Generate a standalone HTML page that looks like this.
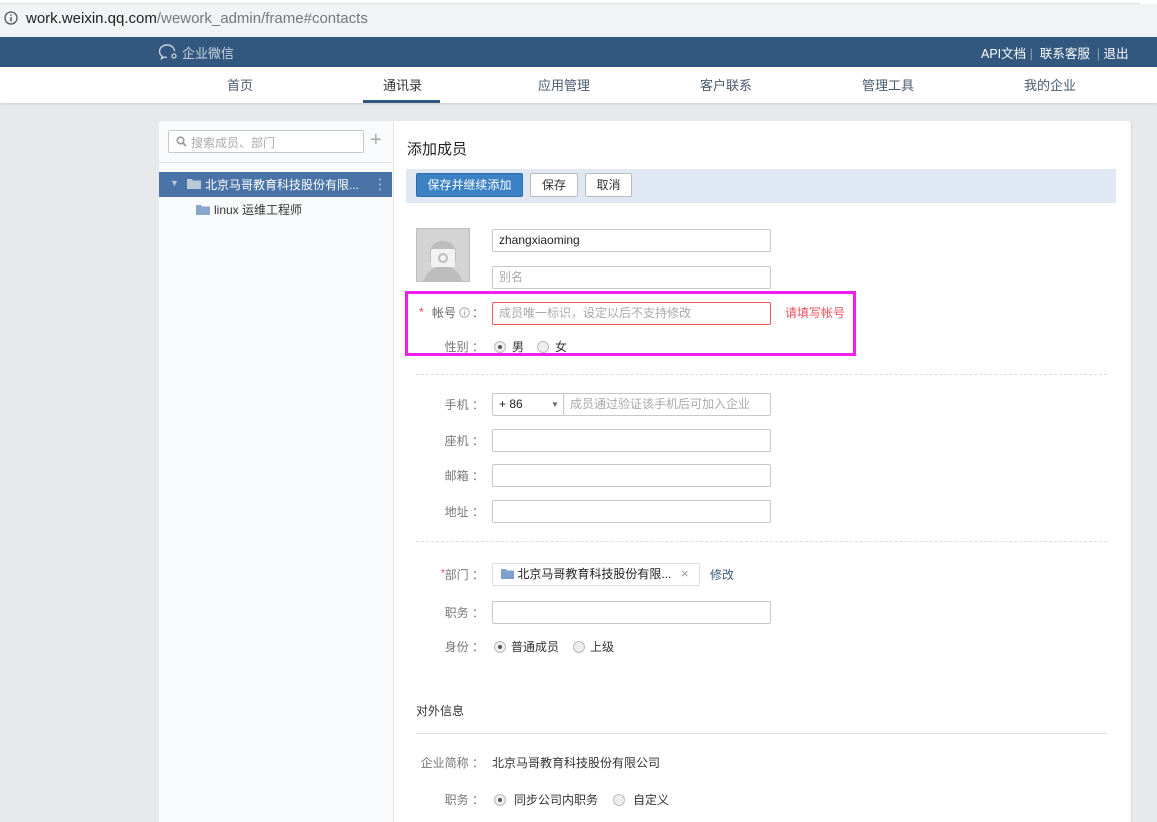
<!DOCTYPE html>
<html><head><meta charset="utf-8"><style>
*{margin:0;padding:0;box-sizing:border-box}
body{width:1157px;height:822px;overflow:hidden;background:#e8e9ec;font-family:"Liberation Sans","Noto Sans CJK SC",sans-serif;font-size:12px;color:#333;position:relative}
.a{position:absolute}
.inp{position:absolute;border:1px solid #c8c8c8;border-radius:2px;background:#fff;height:23px;padding-left:6px;line-height:21px;font-size:12px}
.lbl{position:absolute;left:394px !important;width:90px;text-align:right;color:#777;font-size:12px}
.rad{position:absolute;width:12px;height:12px;border-radius:50%;border:1px solid #bbb;background:#eee}
.rad.on::after{content:"";position:absolute;left:3px;top:3px;width:4px;height:4px;border-radius:50%;background:#555}
.dash{position:absolute;left:416px;width:691px;border-top:1px dashed #ddd}
</style></head><body>
<div class="a" style="left:0;top:0;width:1157px;height:37px;background:#f1f3f4;border-top:4px solid #fff"></div>
<div class="a" style="left:0;top:3px;width:1140px;height:1px;background:#ddd"></div>
<svg class="a" style="left:4px;top:11px" width="14" height="14"><circle cx="7" cy="7" r="6" fill="none" stroke="#555" stroke-width="1.3"/><rect x="6.3" y="6" width="1.4" height="4.5" fill="#555"/><rect x="6.3" y="3.4" width="1.4" height="1.4" fill="#555"/></svg>
<div class="a" style="left:26px;top:10px;font-size:15px;color:#202124">work.weixin.qq.com<span style="color:#777">/wework_admin/frame#contacts</span></div>
<div class="a" style="left:0;top:37px;width:1157px;height:30px;background:#33587f"></div>
<svg class="a" style="left:158px;top:43px" width="22" height="18"><path d="M9 2C4.5 2 1.5 5 1.5 8.5c0 2 1 3.6 2.6 4.7L3.5 15.5 6.3 14c.9.3 1.8.4 2.7.4" fill="none" stroke="#c8d3df" stroke-width="1.4"/><path d="M9 2c4.5 0 7.5 3 7.5 6.3" fill="none" stroke="#c8d3df" stroke-width="1.4"/><circle cx="16" cy="13" r="2" fill="none" stroke="#c8d3df" stroke-width="1.3"/></svg>
<div class="a" style="left:182px;top:43px;font-size:13px;color:#c8d3df">企业微信</div>
<div class="a" style="left:981px;top:43px;font-size:12.5px;color:#fff;white-space:nowrap">API文档 <span style="color:#8aa">|</span>&nbsp; 联系客服 &nbsp;<span style="color:#8aa">|</span> 退出</div>
<div class="a" style="left:0;top:67px;width:1157px;height:36px;background:#fff;box-shadow:0 1px 3px rgba(0,0,0,.12)"></div>
<div class="a" style="top:75px;left:0;width:1157px;font-size:13px;color:#4a5a6e">
<span class="a" style="left:227px">首页</span><span class="a" style="left:383px;color:#333">通讯录</span><span class="a" style="left:538px">应用管理</span><span class="a" style="left:700px">客户联系</span><span class="a" style="left:862px">管理工具</span><span class="a" style="left:1024px">我的企业</span></div>
<div class="a" style="left:363px;top:100px;width:77px;height:3px;background:#33587f"></div>
<div class="a" style="left:159px;top:121px;width:234px;height:701px;background:#f9fafb;border-radius:3px 0 0 0"></div>
<div class="a" style="left:168px;top:130px;width:196px;height:23px;border:1px solid #c5cad1;border-radius:2px;background:#fff"></div>
<svg class="a" style="left:176px;top:136px" width="11" height="11"><circle cx="4.5" cy="4.5" r="3.3" fill="none" stroke="#999" stroke-width="1.6"/><path d="M7 7l3 3" stroke="#999" stroke-width="1.8"/></svg>
<div class="a" style="left:191px;top:134px;color:#aaa">搜索成员、部门</div>
<div class="a" style="left:370px;top:129px;font-size:20px;color:#aaa;font-weight:300">+</div>
<div class="a" style="left:159px;top:162px;width:233px;height:1px;background:#e4e6e9"></div>
<div class="a" style="left:159px;top:172px;width:233px;height:25px;background:#4a74a8"></div>
<div class="a" style="left:170px;top:178px;color:#b7c6d8;font-size:9px">▼</div>
<svg class="a" style="left:187px;top:178px" width="14" height="11"><path d="M0 1h5l1 1.5h8V11H0z" fill="#b9c7d9"/></svg>
<div class="a" style="left:205px;top:176px;color:#fff">北京马哥教育科技股份有限...</div>
<div class="a" style="left:379px;top:177px;width:2px;height:14px;background:radial-gradient(circle,#9fb3cc 1px,transparent 1.2px) 0 0/2px 5px"></div>
<svg class="a" style="left:196px;top:204px" width="14" height="11"><path d="M0 1h5l1 1.5h8V11H0z" fill="#89a6cc"/></svg>
<div class="a" style="left:214px;top:201px;color:#333">linux 运维工程师</div>
<div class="a" style="left:393px;top:121px;width:738px;height:701px;background:#fff;border-radius:0 3px 0 0;border-left:1px solid #e4e6e9;box-shadow:1px 0 1px rgba(0,0,0,.08)"></div>
<div class="a" style="left:407px;top:138px;font-size:15px;color:#222">添加成员</div>
<div class="a" style="left:406px;top:169px;width:710px;height:34px;background:#dfe8f3"></div>
<div class="a" style="left:416px;top:173px;width:107px;height:24px;background:#3b82c4;border:1px solid #2f6fae;border-radius:2px;color:#fff;text-align:center;line-height:22px">保存并继续添加</div>
<div class="a" style="left:530px;top:173px;width:48px;height:24px;background:#fff;border:1px solid #bbb;border-radius:2px;text-align:center;line-height:22px">保存</div>
<div class="a" style="left:585px;top:173px;width:47px;height:24px;background:#fff;border:1px solid #bbb;border-radius:2px;text-align:center;line-height:22px">取消</div>
<div class="a" style="left:416px;top:228px;width:54px;height:54px;background:#d4d4d4;border:1px solid #c0c0c0;overflow:hidden">
<div class="a" style="left:13px;top:12px;width:26px;height:22px;border-radius:12px 12px 0 0;background:#bdbdbd"></div>
<div class="a" style="left:6px;top:37px;width:40px;height:20px;border-radius:20px 20px 0 0;background:#bdbdbd"></div>
<div class="a" style="left:14px;top:20px;width:24px;height:18px;background:#f2f2f2;border-radius:2px"></div>
<div class="a" style="left:21px;top:24px;width:10px;height:10px;border:2px solid #bbb;border-radius:50%"></div></div>
<div class="inp" style="left:492px;top:229px;width:279px;color:#222">zhangxiaoming</div>
<div class="inp" style="left:492px;top:266px;width:279px;color:#aaa">别名</div>
<div class="a" style="left:405px;top:291px;width:451px;height:65px;border:3px solid #f01ff0"></div>
<div class="a" style="left:419px;top:305px;color:#e0434e">*</div>
<div class="a" style="left:432px;top:304px;color:#666">帐号</div>
<svg class="a" style="left:459px;top:307px" width="11" height="11"><circle cx="5.5" cy="5.5" r="4.8" fill="none" stroke="#aaa"/><rect x="5" y="4.5" width="1" height="4" fill="#aaa"/><rect x="5" y="2.6" width="1" height="1" fill="#aaa"/></svg>
<div class="a" style="left:472px;top:304px;color:#666">：</div>
<div class="inp" style="left:492px;top:302px;width:279px;color:#aaa;border-color:#f05b5b">成员唯一标识，设定以后不支持修改</div>
<div class="a" style="left:785px;top:304px;color:#f0505c">请填写帐号</div>
<div class="lbl" style="top:338px">性别 ：</div>
<div class="rad on" style="left:494px;top:341px"></div><div class="a" style="left:512px;top:338px">男</div>
<div class="rad" style="left:537px;top:341px"></div><div class="a" style="left:555px;top:338px">女</div>
<div class="dash" style="top:374px"></div>
<div class="lbl" style="top:396px">手机 ：</div>
<div class="inp" style="left:492px;top:393px;width:72px;color:#222">+ 86<span class="a" style="left:58px;top:0;font-size:8px;color:#666">▼</span></div>
<div class="inp" style="left:563px;top:393px;width:208px;color:#aaa">成员通过验证该手机后可加入企业</div>
<div class="lbl" style="top:432px">座机 ：</div><div class="inp" style="left:492px;top:429px;width:279px"></div>
<div class="lbl" style="top:467px">邮箱 ：</div><div class="inp" style="left:492px;top:464px;width:279px"></div>
<div class="lbl" style="top:503px">地址 ：</div><div class="inp" style="left:492px;top:500px;width:279px"></div>
<div class="dash" style="top:541px"></div>
<div class="a" style="left:441px;top:568px;color:#e0434e;font-size:10px">*</div>
<div class="lbl" style="top:566px">部门 ：</div>
<div class="inp" style="left:492px;top:563px;width:208px;border-color:#ddd;color:#222;padding-left:8px"><svg width="13" height="10" style="vertical-align:-1px"><path d="M0 0h5l1 1.5h7V10H0z" fill="#7fa0cc"/></svg> 北京马哥教育科技股份有限...<span class="a" style="left:188px;color:#999;font-size:13px;top:-1px">×</span></div>
<div class="a" style="left:710px;top:566px;color:#3d5a80">修改</div>
<div class="lbl" style="top:604px">职务 ：</div><div class="inp" style="left:492px;top:601px;width:279px"></div>
<div class="lbl" style="top:638px">身份 ：</div>
<div class="rad on" style="left:494px;top:641px"></div><div class="a" style="left:511px;top:638px">普通成员</div>
<div class="rad" style="left:573px;top:641px"></div><div class="a" style="left:590px;top:638px">上级</div>
<div class="a" style="left:416px;top:702px">对外信息</div>
<div class="a" style="left:416px;top:733px;width:691px;height:1px;background:#e2e2e2"></div>
<div class="lbl" style="top:754px">企业简称 ：</div>
<div class="a" style="left:492px;top:754px">北京马哥教育科技股份有限公司</div>
<div class="lbl" style="top:791px">职务 ：</div>
<div class="rad on" style="left:494px;top:794px"></div><div class="a" style="left:514px;top:791px">同步公司内职务</div>
<div class="rad" style="left:613px;top:794px"></div><div class="a" style="left:633px;top:791px">自定义</div>
</body></html>
